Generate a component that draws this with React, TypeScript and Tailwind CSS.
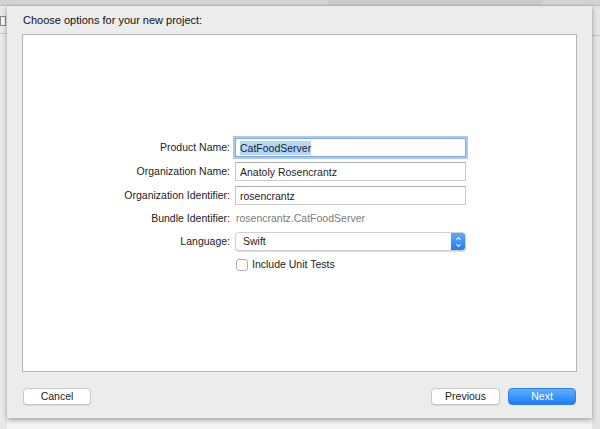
import { ChevronDown, ChevronUp } from 'lucide-react';

const font = { fontFamily: '"Liberation Sans", Arial, sans-serif' };

function Field({ value, focused }: { value: string; focused?: boolean }) {
  return (
    <div
      className={`h-[19px] w-[231px] bg-white flex items-center px-[4px] text-[10.5px] text-[#1d1d1d] ${
        focused
          ? 'border border-[#7fa8e6] shadow-[0_0_0_2px_#a9c8f3]'
          : 'border border-[#c7c7c7] border-t-[#b2b2b2]'
      }`}
    >
      <span className={focused ? 'bg-[#b4d6fe] leading-[14px]' : 'leading-[14px]'}>{value}</span>
    </div>
  );
}

function Row({ label, children }: { label: string; children: React.ReactNode }) {
  return (
    <div className="flex items-center gap-[5px]">
      <div className="w-[207px] text-right text-[10.5px] text-[#222]">{label}</div>
      {children}
    </div>
  );
}

function Button({ label, primary, width }: { label: string; primary?: boolean; width: string }) {
  return (
    <button
      className={`${width} h-[17px] rounded-[4px] text-[10.5px] flex items-center justify-center ${
        primary
          ? 'bg-gradient-to-b from-[#5fb0fd] to-[#1a7cf5] text-white border border-[#2b82f0]'
          : 'bg-white text-[#222] border border-[#c9c9c9] shadow-[0_1px_0_#d6d6d6]'
      }`}
    >
      {label}
    </button>
  );
}

export default function App() {
  return (
    <div className="w-[600px] h-[429px] bg-[#f4f4f4] overflow-hidden flex flex-col" style={font}>
      {/* window toolbar edge */}
      <div className="h-[6px] bg-[#d3d3d3] border-b border-[#bdbdbd] shrink-0 flex">
        <div className="w-[328px]" />
        <div className="w-[214px] bg-[#c9c9c9]" />
      </div>
      <div className="flex flex-1">
        {/* left window strip */}
        <div className="w-[7px] bg-[#e9e9e9] flex flex-col">
          <div className="h-[10px]" />
          <div className="h-[10px] w-[6px] border border-[#8a8a8a] bg-[#f6f6f6]" />
          <div className="mt-[7px] h-[1px] bg-[#c9c9c9]" />
        </div>
        {/* sheet */}
        <div className="w-[585px] h-[412px] bg-[#ececec] flex flex-col px-[15px] shadow-[0_2px_5px_rgba(0,0,0,0.35)] z-10">
          <div className="h-[28px] flex items-center pl-[1px] text-[11px] text-[#111]">
            Choose options for your new project:
          </div>
          <div className="h-[338px] bg-white border border-[#b4b4b4] flex flex-col pt-[103px]">
            <div className="flex flex-col gap-[5px]">
              <Row label="Product Name:">
                <Field value="CatFoodServer" focused />
              </Row>
              <Row label="Organization Name:">
                <Field value="Anatoly Rosencrantz" />
              </Row>
              <Row label="Organization Identifier:">
                <Field value="rosencrantz" />
              </Row>
              <Row label="Bundle Identifier:">
                <div className="h-[17px] flex items-center text-[10.5px] text-[#7b7b7b] pl-[1px]">
                  rosencrantz.CatFoodServer
                </div>
              </Row>
              <Row label="Language:">
                <div className="h-[19px] w-[231px] flex rounded-[4px] bg-white border border-[#cfcfcf] shadow-[0_1px_1px_rgba(0,0,0,0.15)] overflow-hidden">
                  <div className="flex-1 flex items-center pl-[7px] text-[10.5px] text-[#1d1d1d]">Swift</div>
                  <div className="w-[14px] bg-gradient-to-b from-[#5aa9fb] to-[#1c7df3] flex flex-col items-center justify-center text-white">
                    <ChevronUp size={7} strokeWidth={3.5} />
                    <ChevronDown size={7} strokeWidth={3.5} />
                  </div>
                </div>
              </Row>
              <div className="flex items-center pl-[213px] gap-[4px] pt-[1px]">
                <div className="w-[12px] h-[12px] rounded-[3px] border border-[#adadad] bg-white" />
                <span className="text-[10.5px] text-[#222]">Include Unit Tests</span>
              </div>
            </div>
          </div>
          <div className="flex items-center justify-between pt-[16px] px-[1px]">
            <Button label="Cancel" width="w-[68px]" />
            <div className="flex gap-[8px]">
              <Button label="Previous" width="w-[69px]" />
              <Button label="Next" width="w-[68px]" primary />
            </div>
          </div>
        </div>
        {/* right window strip */}
        <div className="w-[8px] bg-[#e4e4e4] flex flex-col">
          <div className="h-[29px]" />
          <div className="h-[1px] bg-[#c4c4c4]" />
        </div>
      </div>
    </div>
  );
}
